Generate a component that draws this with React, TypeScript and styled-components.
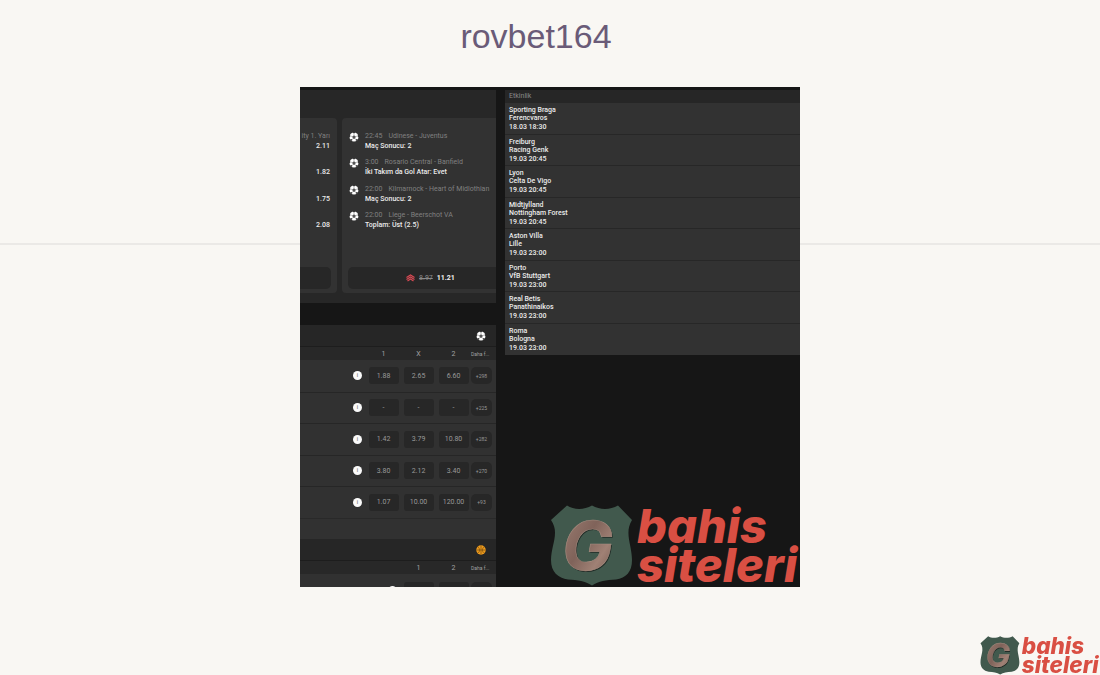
import React, { useId } from "react";
import styled, { createGlobalStyle } from "styled-components";

const GlobalStyle = createGlobalStyle`
  * { box-sizing: border-box; }
  body {
    margin: 0;
    background: #f9f7f3;
    font-family: "Liberation Sans", Arial, sans-serif;
  }
  h1, h2, p, ul, figure { margin: 0; padding: 0; }
  ul { list-style: none; }
  button { font: inherit; border: 0; padding: 0; cursor: pointer; }
`;

const Header = styled.header`
  padding: 16px 28px 31px 0;
  text-align: center;
`;

const Title = styled.h1`
  font-size: 34px;
  line-height: 40px;
  font-weight: 400;
  color: #6a5b78;
`;

const Main = styled.main`
  display: flex;
  align-items: flex-start;
`;

const Rule = styled.div`
  flex: 1;
  height: 2px;
  margin-top: 156px;
  background: #ebe9e6;
`;

const Preview = styled.section`
  position: relative;
  flex: 0 1 500px;
  display: grid;
  grid-template-columns: 196px 1fr;
  column-gap: 9px;
  height: 500px;
  overflow: hidden;
  background: #161616;
  color: #ececec;
  font-family: Roboto, sans-serif;
  font-size: 7px;
  line-height: 8px;
`;

const LeftColumn = styled.div`
  display: flex;
  flex-direction: column;
  gap: 22px;
  min-width: 0;
  min-height: 0;
  padding-top: 3px;
`;

const Carousel = styled.section`
  display: flex;
  gap: 5px;
  height: 213px;
  flex: none;
  padding: 28px 0 10px;
  overflow: hidden;
  background: #272727;
`;

const Slip = styled.article<{ $leading?: boolean }>`
  flex: ${(p) => (p.$leading ? "0 0 37px" : "1 0 154px")};
  display: flex;
  flex-direction: column;
  justify-content: space-between;
  padding: 13px 0 4px ${(p) => (p.$leading ? "0" : "6px")};
  border-radius: ${(p) => (p.$leading ? "0 4px 4px 0" : "4px 0 0 4px")};
  background: #323232;
`;

const Picks = styled.ul`
  display: grid;
  grid-template-rows: repeat(4, 1fr);
  height: 105px;
`;

const Pick = styled.li`
  display: grid;
  grid-template-columns: 11px 1fr;
  column-gap: 6px;
  align-items: start;

  svg { margin: 1px 0 0 1px; }
`;

const PickMatch = styled.p`
  display: flex;
  gap: 6px;
  line-height: 10px;
  white-space: nowrap;
  color: #808080;
`;

const PickBet = styled.p`
  line-height: 11px;
  font-weight: 500;
  white-space: nowrap;
`;

const EdgePick = styled.li`
  padding-right: 7px;
  text-align: right;
`;

const EdgeMatch = styled(PickMatch)`
  height: 10px;
  justify-content: flex-end;
`;

const SlipButton = styled.button<{ $edge?: boolean }>`
  display: flex;
  align-items: center;
  justify-content: center;
  height: 22px;
  margin-right: ${(p) => (p.$edge ? "6px" : "0")};
  border-radius: ${(p) => (p.$edge ? "0 5px 5px 0" : "5px 0 0 5px")};
  background: #272727;
  color: #f2f2f2;
`;

const Prices = styled.span`
  display: flex;
  gap: 4px;
  padding-left: 17px;
  font-weight: 700;

  s { color: #8a8a8a; font-weight: 400; }
`;

const Markets = styled.section`
  flex: 1;
  min-height: 0;
  overflow: hidden;
  background: #313131;
`;

const SportBar = styled.div`
  display: flex;
  align-items: center;
  justify-content: flex-end;
  height: 22px;
  padding-right: 10px;
  background: #262626;
  border-bottom: 1px solid #1d1d1d;
`;

const OddsTable = styled.table`
  width: 100%;
  table-layout: fixed;
  border-collapse: collapse;

  th, td { padding: 0; text-align: center; }
`;

const HeadRow = styled.tr`
  height: 13px;
  background: #282828;
  color: #a2a2a2;

  th { font-weight: 400; }
  th:last-child {
    padding-right: 7px;
    font-size: 5px;
    white-space: nowrap;
    text-align: left;
  }
`;

const OddsBody = styled.tbody`
  tr { height: 31px; }
  tr:nth-child(odd) { height: 32px; }
  tr + tr td { border-top: 1px solid #262626; }
  td:first-child { text-align: right; padding-right: 4px; }
  td:last-child { padding-right: 4px; }
`;

const OddsButton = styled.button<{ $more?: boolean }>`
  display: block;
  width: ${(p) => (p.$more ? "21px" : "30px")};
  height: 17px;
  margin: 0 auto;
  border-radius: ${(p) => (p.$more ? "5px" : "3px")};
  background: #272727;
  color: #999;
  font-size: ${(p) => (p.$more ? "5px" : "7px")};
`;

const InfoButton = styled.button`
  display: inline-block;
  width: 9px;
  height: 9px;
  border-radius: 50%;
  background: #fafafa;
  color: #888;
  font-size: 5px;
  line-height: 9px;
  font-weight: 700;
  vertical-align: middle;
`;

const Spacer = styled.div`
  height: 21px;
  border-top: 1px solid #292929;
`;

const Events = styled.section`
  min-width: 0;
  padding-top: 3px;
`;

const EventsHeading = styled.h2`
  height: 13px;
  padding: 2px 4px 0;
  background: #262626;
  color: #8a8a8a;
  font-size: 7px;
  line-height: 8px;
  font-weight: 400;
`;

const EventList = styled.ul`
  display: grid;
  grid-template-rows: repeat(8, 1fr);
  height: 252px;
  background: #323232;
`;

const EventItem = styled.li`
  padding: 3px 4px 0;
  border-bottom: 1px solid #272727;
  font-weight: 500;

  time { display: block; line-height: 11px; }
  &:last-child { border-bottom: 0; }
`;

const Watermark = styled.div`
  position: absolute;
  right: 0;
  bottom: 0;
  width: 250px;
`;

const CornerLink = styled.a`
  position: fixed;
  right: 0;
  bottom: 0;
  width: 120px;
`;

const BrandSvg = styled.svg`
  display: block;
  width: 100%;
  height: auto;
`;

function Brand() {
  const id = useId();
  return (
    <BrandSvg viewBox="0 0 250 84" role="img" aria-label="bahis siteleri">
      <defs>
        <linearGradient id={id} x1="0" y1="0" x2="1" y2="1">
          <stop offset="0" stopColor="#a18276" />
          <stop offset="0.45" stopColor="#80635a" />
          <stop offset="0.7" stopColor="#a08175" />
          <stop offset="1" stopColor="#6b4f47" />
        </linearGradient>
      </defs>
      <path
        d="M17 2.5C24 7 34 7 42 2.5C50 7 60 7 68 2.5L82 17C74 30 82 42 82 57C82 69 76 75 66 76.500C56 77 49 78 42 82.500C35 78 28 77 18 76.500C8 75 1 69 1 57C1 42 10 30 1 17Z"
        fill="#41594d"
      />
      <g fontFamily="Inter, sans-serif" fontWeight="700" fontStyle="italic" fontSize="68">
        <text x="13" y="68" fill="#222c27" aria-hidden="true">G</text>
        <text x="12" y="67" fill={`url(#${id})`} stroke="#a88d80" strokeWidth="0.6">G</text>
      </g>
      <g fontFamily="Inter, sans-serif" fontWeight="800" fontStyle="italic" fontSize="47" fill="#d94f43">
        <text x="87" y="40">bahis</text>
        <text x="87" y="79">siteleri</text>
      </g>
    </BrandSvg>
  );
}

function Football() {
  return (
    <svg width="10" height="10" viewBox="0 0 20 20" aria-hidden="true">
      <circle cx="10" cy="10" r="9" fill="#fff" />
      <path d="M7 0h6l-3 3.500zM20 5v6l-3.500-3zM0 5v6l3.500-3zM18 14l-4 5-.5-4.500zM2 14l4 5 .5-4.500z" fill="#323232" />
      <path d="M10 6.500l3.600 2.600-1.400 4.200H7.800L6.400 9.100z" fill="#555" />
      <path d="M10 6.500V3M13.600 9.100l3-1M12.200 13.300l1.600 2M7.800 13.300l-1.600 2M6.400 9.100l-3-1" stroke="#777" fill="none" />
    </svg>
  );
}

function Basketball() {
  return (
    <svg width="10" height="10" viewBox="0 0 20 20" aria-hidden="true">
      <circle cx="10" cy="10" r="9.500" fill="#f09c1c" />
      <path d="M10 1v18M1 10h18M4 3.500c4 3 4 10 0 13M16 3.500c-4 3-4 10 0 13" stroke="#6b4510" strokeWidth="1.300" fill="none" />
    </svg>
  );
}

function BoostIcon() {
  return (
    <svg width="9" height="8" viewBox="0 0 18 16" aria-hidden="true">
      <path d="M1 7l8-5 8 5M1 11l8-5 8 5M3 14l6-4 6 4" stroke="#d94a54" strokeWidth="2.400" fill="none" />
    </svg>
  );
}

const picks = [
  { time: "22:45", match: "Udinese - Juventus", bet: "Maç Sonucu: 2" },
  { time: "3:00", match: "Rosario Central - Banfield", bet: "İki Takım da Gol Atar: Evet" },
  { time: "22:00", match: "Kilmarnock - Heart of Midlothian", bet: "Maç Sonucu: 2" },
  { time: "22:00", match: "Liege - Beerschot VA", bet: "Toplam: Üst (2.5)" },
];

const edgePrices = ["2.11", "1.82", "1.75", "2.08"];

const odds = [
  ["1.88", "2.65", "6.60", "+298"],
  ["-", "-", "-", "+225"],
  ["1.42", "3.79", "10.80", "+282"],
  ["3.80", "2.12", "3.40", "+270"],
  ["1.07", "10.00", "120.00", "+93"],
];

const events = [
  ["Sporting Braga", "Ferencvaros", "18.03 18:30"],
  ["Freiburg", "Racing Genk", "19.03 20:45"],
  ["Lyon", "Celta De Vigo", "19.03 20:45"],
  ["Midtjylland", "Nottingham Forest", "19.03 20:45"],
  ["Aston Villa", "Lille", "19.03 23:00"],
  ["Porto", "VfB Stuttgart", "19.03 23:00"],
  ["Real Betis", "Panathinaikos", "19.03 23:00"],
  ["Roma", "Bologna", "19.03 23:00"],
];

const PriceCol = styled.col`
  width: 35px;
`;

const MoreCol = styled.col`
  width: 25px;
`;

function OddsColumns({ prices }: { prices: number }) {
  return (
    <colgroup>
      <col />
      {Array.from({ length: prices }, (_, i) => (
        <PriceCol key={i} />
      ))}
      <MoreCol />
    </colgroup>
  );
}

export default function App() {
  return (
    <>
      <GlobalStyle />
      <Header>
        <Title>rovbet164</Title>
      </Header>
      <Main>
        <Rule />
        <Preview>
          <LeftColumn>
            <Carousel>
              <Slip $leading>
                <Picks>
                  {edgePrices.map((price, i) => (
                    <EdgePick key={price}>
                      <EdgeMatch>{i === 0 ? "ity 1. Yarı" : ""}</EdgeMatch>
                      <PickBet>{price}</PickBet>
                    </EdgePick>
                  ))}
                </Picks>
                <SlipButton $edge aria-label="Kupon" />
              </Slip>
              <Slip>
                <Picks>
                  {picks.map((pick) => (
                    <Pick key={pick.match}>
                      <Football />
                      <div>
                        <PickMatch>
                          <span>{pick.time}</span>
                          <span>{pick.match}</span>
                        </PickMatch>
                        <PickBet>{pick.bet}</PickBet>
                      </div>
                    </Pick>
                  ))}
                </Picks>
                <SlipButton>
                  <Prices>
                    <BoostIcon />
                    <s>8.97</s>
                    <span>11.21</span>
                  </Prices>
                </SlipButton>
              </Slip>
            </Carousel>
            <Markets>
              <SportBar>
                <Football />
              </SportBar>
              <OddsTable>
                <OddsColumns prices={3} />
                <thead>
                  <HeadRow>
                    <th />
                    <th>1</th>
                    <th>X</th>
                    <th>2</th>
                    <th>Daha f...</th>
                  </HeadRow>
                </thead>
                <OddsBody>
                  {odds.map((row) => (
                    <tr key={row[3]}>
                      <td>
                        <InfoButton>i</InfoButton>
                      </td>
                      {row.map((value, i) => (
                        <td key={i}>
                          <OddsButton $more={i === 3}>{value}</OddsButton>
                        </td>
                      ))}
                    </tr>
                  ))}
                </OddsBody>
              </OddsTable>
              <Spacer />
              <SportBar>
                <Basketball />
              </SportBar>
              <OddsTable>
                <OddsColumns prices={2} />
                <thead>
                  <HeadRow>
                    <th />
                    <th>1</th>
                    <th>2</th>
                    <th>Daha f...</th>
                  </HeadRow>
                </thead>
                <OddsBody>
                  <tr>
                    <td>
                      <InfoButton aria-label="Bilgi" />
                    </td>
                    <td>
                      <OddsButton aria-label="1" />
                    </td>
                    <td>
                      <OddsButton aria-label="2" />
                    </td>
                    <td>
                      <OddsButton $more aria-label="Daha fazla" />
                    </td>
                  </tr>
                </OddsBody>
              </OddsTable>
            </Markets>
          </LeftColumn>
          <Events>
            <EventsHeading>Etkinlik</EventsHeading>
            <EventList>
              {events.map(([home, away, date]) => (
                <EventItem key={home}>
                  <p>{home}</p>
                  <p>{away}</p>
                  <time>{date}</time>
                </EventItem>
              ))}
            </EventList>
          </Events>
          <Watermark>
            <Brand />
          </Watermark>
        </Preview>
        <Rule />
      </Main>
      <CornerLink href="#" aria-label="bahis siteleri">
        <Brand />
      </CornerLink>
    </>
  );
}
